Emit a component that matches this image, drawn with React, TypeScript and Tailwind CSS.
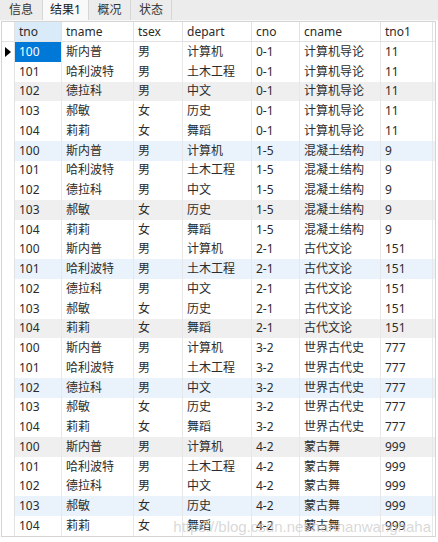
import React from "react";

const teachers = [
  ["100", "斯内普", "男", "计算机"],
  ["101", "哈利波特", "男", "土木工程"],
  ["102", "德拉科", "男", "中文"],
  ["103", "郝敏", "女", "历史"],
  ["104", "莉莉", "女", "舞蹈"],
];
const courses = [
  ["0-1", "计算机导论", "11"],
  ["1-5", "混凝土结构", "9"],
  ["2-1", "古代文论", "151"],
  ["3-2", "世界古代史", "777"],
  ["4-2", "蒙古舞", "999"],
];

const rows: string[][] = [];
courses.forEach((c) => teachers.forEach((t) => rows.push([...t, ...c])));

const headers = ["tno", "tname", "tsex", "depart", "cno", "cname", "tno1"];
const gridCols = "grid grid-cols-[13px_47px_72px_49px_69px_48px_81px_52px]";

function rowBg(i: number) {
  if (i % 6 === 2) return "bg-[#efefef]";
  if (i % 6 === 5) return "bg-[#eaf3fc]";
  return "bg-white";
}

export default function App() {
  return (
    <div
      className="relative w-[438px] h-[542px] overflow-hidden bg-white text-[#2b2b2b]"
      style={{ fontFamily: '"Noto Sans","Noto Sans CJK SC",sans-serif' }}
    >
      {/* tab bar */}
      <div className="flex h-[20px] bg-[#ececec] text-[12px] leading-none">
        <div className="flex w-[43px] items-center justify-center border-r border-[#d6d6d6] text-[#333]">信息</div>
        <div className="flex w-[45px] items-center justify-center bg-[#f9f9f9] text-[#222]">结果1</div>
        <div className="flex w-[43px] items-center justify-center border-x border-[#d6d6d6] text-[#333]">概况</div>
        <div className="flex w-[41px] items-center justify-center border-r border-[#d6d6d6] text-[#333]">状态</div>
      </div>
      <div className="h-[1px] bg-[#f9f9f9]" />
      {/* table */}
      <div className="ml-[1px] mr-[2px] border border-[#d4d4d4] text-[12px] leading-none">
        <div className={`${gridCols} h-[20px] border-b border-[#e2e2e2] bg-white`}>
          <div className="border-r border-[#e2e2e2]" />
          {headers.map((h, j) => (
            <div
              key={h}
              className={`flex items-center border-r border-[#e2e2e2] pl-[4px] ${j === 0 ? "bg-[#d9eaf8]" : ""}`}
            >
              {h}
            </div>
          ))}
        </div>
        {rows.map((r, i) => (
          <div key={i} className={`${gridCols} h-[19.76px] ${rowBg(i)}`}>
            <div className="flex items-center justify-center border-r border-[#e2e2e2] bg-white">
              {i === 0 && (
                <svg width="6" height="10" viewBox="0 0 6 10">
                  <path d="M0 0 L6 5 L0 10 Z" fill="#000" />
                </svg>
              )}
            </div>
            {r.map((v, j) => (
              <div
                key={j}
                className={`flex items-center border-r border-[#e8e8e8] pl-[4px] ${
                  i === 0 && j === 0 ? "bg-[#0078d7] text-white" : ""
                }`}
              >
                {v}
              </div>
            ))}
          </div>
        ))}
      </div>
      {/* watermark */}
      <div
        className="pointer-events-none absolute right-[7px] top-[519px] text-[15px] leading-none text-[rgba(200,200,200,0.7)]"
        style={{ fontFamily: '"Liberation Sans",Arial,sans-serif' }}
      >
        https://blog.csdn.net/hanhanwanghaha
      </div>
    </div>
  );
}
